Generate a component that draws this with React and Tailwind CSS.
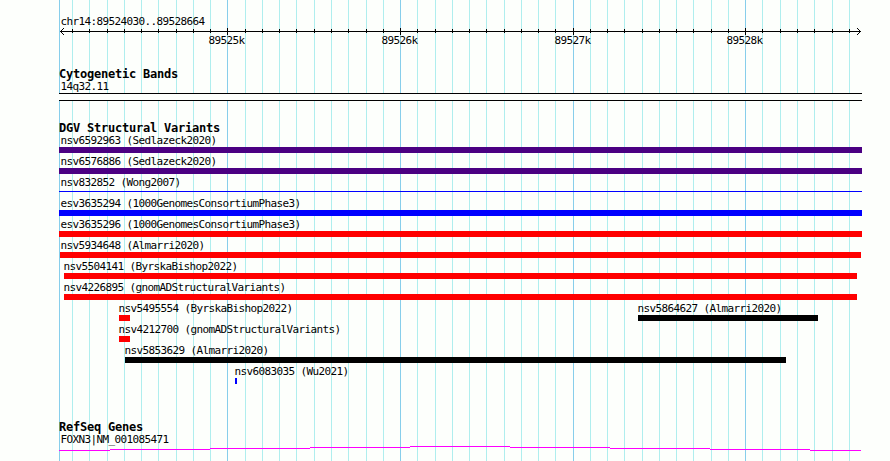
import React from "react";

const LEFT = 59;
const WIDTH = 803;

// one line every 100 bp, a darker one every 1000 bp
const gridLines = Array.from({ length: 46 }, (_, i) => i - 9).map((step) => ({
  x: Math.floor(227.93 + 17.26 * step),
  major: step % 10 === 0,
}));

const rulerLabels = [
  { x: 208.5, text: "89525k" },
  { x: 381.5, text: "89526k" },
  { x: 554.5, text: "89527k" },
  { x: 726.5, text: "89528k" },
];

const variantRows = [
  [{ name: "nsv6592963 (Sedlazeck2020)", start: 59, end: 862, color: "bg-[#4b0082]", pad: 1.5 }],
  [{ name: "nsv6576886 (Sedlazeck2020)", start: 59, end: 862, color: "bg-[#4b0082]", pad: 1.5 }],
  [{ name: "nsv832852 (Wong2007)", start: 59, end: 862, color: "bg-[#0000ff]", pad: 1.5, thin: true }],
  [{ name: "esv3635294 (1000GenomesConsortiumPhase3)", start: 59, end: 862, color: "bg-[#0000ff]", pad: 1.5 }],
  [{ name: "esv3635296 (1000GenomesConsortiumPhase3)", start: 59, end: 862, color: "bg-[#ff0000]", pad: 1.5 }],
  [{ name: "nsv5934648 (Almarri2020)", start: 60, end: 861, color: "bg-[#ff0000]", pad: 0.5 }],
  [{ name: "nsv5504141 (ByrskaBishop2022)", start: 64, end: 857, color: "bg-[#ff0000]", pad: -0.5 }],
  [{ name: "nsv4226895 (gnomADStructuralVariants)", start: 64, end: 857, color: "bg-[#ff0000]", pad: -0.5 }],
  [
    { name: "nsv5495554 (ByrskaBishop2022)", start: 119, end: 130, color: "bg-[#ff0000]", pad: -0.5 },
    { name: "nsv5864627 (Almarri2020)", start: 638, end: 818, color: "bg-black", pad: -0.5 },
  ],
  [{ name: "nsv4212700 (gnomADStructuralVariants)", start: 119, end: 130, color: "bg-[#ff0000]", pad: -0.5 }],
  [{ name: "nsv5853629 (Almarri2020)", start: 125, end: 786, color: "bg-black", pad: -0.5 }],
  [{ name: "nsv6083035 (Wu2021)", start: 235, end: 237, color: "bg-[#0000ff]", pad: -0.5 }],
];

const Grid = () => (
  <svg
    className="absolute inset-0"
    width="890"
    height="461"
    shapeRendering="crispEdges"
  >
    <rect x={LEFT} y="0" width="1" height="461" fill="#87ceeb" />
    {gridLines.map(({ x, major }) => (
      <rect
        key={x}
        x={x}
        y="0"
        width="1"
        height="461"
        fill={major ? "#87ceeb" : "#afeeee"}
      />
    ))}
  </svg>
);

const Ruler = () => (
  <svg className="block" width="890" height="24" viewBox="0 25 890 24">
    <g shapeRendering="crispEdges">
      <rect x="60" y="31" width="801" height="1" />
      {gridLines.map(({ x, major }) => (
        <rect
          key={x}
          x={x}
          y={major ? 28 : 29}
          width="1"
          height={major ? 7 : 4}
        />
      ))}
      {[1, 2, 3].map((d) => (
        <g key={d}>
          <rect x={60 + d} y={31 - d} width="1" height="1" />
          <rect x={60 + d} y={31 + d} width="1" height="1" />
          <rect x={860 - d} y={31 - d} width="1" height="1" />
          <rect x={860 - d} y={31 + d} width="1" height="1" />
        </g>
      ))}
    </g>
    {rulerLabels.map(({ x, text }) => (
      <text key={text} x={x} y="44" className="text-[11px] tracking-[-0.62px]">
        {text}
      </text>
    ))}
  </svg>
);

const Label = ({ children, pad = 0 }) => (
  <p
    className="h-3 whitespace-nowrap text-[11px] leading-3 tracking-[-0.62px]"
    style={{ marginLeft: pad }}
  >
    {children}
  </p>
);

const TrackTitle = ({ children }) => (
  <h2 className="h-3 whitespace-nowrap text-xs font-bold leading-3 tracking-[-0.22px]">
    {children}
  </h2>
);

const Feature = ({ feature, offset }) => (
  <div
    className="shrink-0"
    style={{ marginLeft: offset, width: feature.end - feature.start }}
  >
    <Label pad={feature.pad}>{feature.name}</Label>
    <div
      className={`${feature.color} ${feature.thin ? "mt-0.5 h-px" : "h-1.5"}`}
    />
  </div>
);

const VariantRow = ({ row }) => (
  <div className="flex h-[21px]">
    {row.map((feature, i) => (
      <Feature
        key={feature.name}
        feature={feature}
        offset={feature.start - (i === 0 ? LEFT : row[i - 1].end)}
      />
    ))}
  </div>
);

const GenePath = () => (
  <svg
    className="block"
    width={WIDTH}
    height="6"
    viewBox="59 446 803 6"
    shapeRendering="crispEdges"
    fill="#ff00ff"
  >
    <rect x="59" y="450" width="51" height="1" />
    <rect x="110" y="449" width="100" height="1" />
    <rect x="210" y="448" width="100" height="1" />
    <rect x="310" y="447" width="100" height="1" />
    <rect x="410" y="446" width="100" height="1" />
    <rect x="510" y="447" width="100" height="1" />
    <rect x="610" y="448" width="100" height="1" />
    <rect x="710" y="449" width="100" height="1" />
    <rect x="810" y="450" width="51" height="1" />
  </svg>
);

export default function App() {
  return (
    <div className="relative h-[461px] w-[890px] overflow-hidden bg-[#fdfffc] font-['DejaVu_Sans_Mono',monospace] text-black">
      <Grid />
      <main className="relative">
        <header className="h-[68px] pt-4">
          <div className="h-[9px] pl-[60.5px]">
            <Label>chr14:89524030..89528664</Label>
          </div>
          <Ruler />
        </header>

        <section className="ml-[59px] flex h-[54px] w-[803px] flex-col">
          <TrackTitle>Cytogenetic Bands</TrackTitle>
          <div className="pt-px">
            <Label pad={1.5}>14q32.11</Label>
          </div>
          <div className="h-2 border-y border-black bg-[#fdfffc]" />
        </section>

        <section className="ml-[59px] h-[299px] w-[803px]">
          <TrackTitle>DGV Structural Variants</TrackTitle>
          <div className="mt-px">
            {variantRows.map((row) => (
              <VariantRow key={row[0].name} row={row} />
            ))}
          </div>
        </section>

        <section className="ml-[59px] w-[803px]">
          <TrackTitle>RefSeq Genes</TrackTitle>
          <div className="pt-px">
            <Label pad={1.5}>FOXN3|NM_001085471</Label>
          </div>
          <GenePath />
        </section>
      </main>
    </div>
  );
}
